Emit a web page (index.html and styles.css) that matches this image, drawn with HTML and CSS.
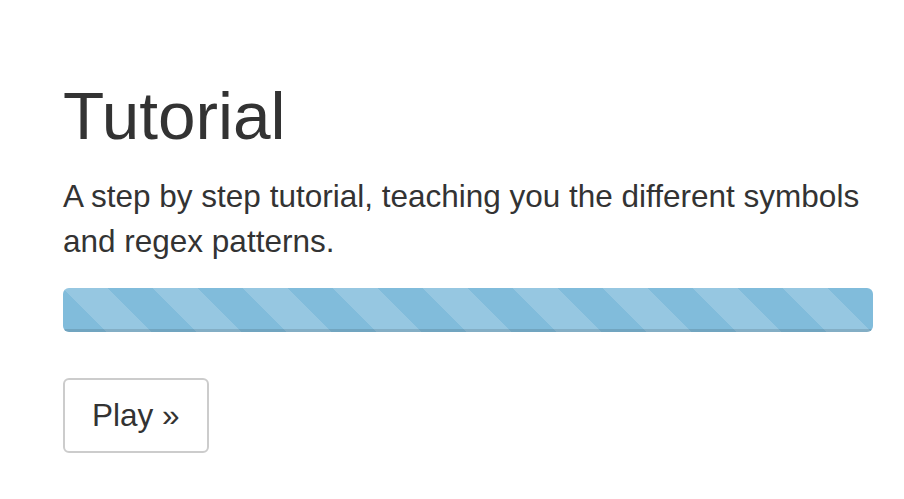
FILE: index.html
```html
<!DOCTYPE html>
<html lang="en">
<head>
<meta charset="utf-8">
<title>Tutorial</title>
<link rel="stylesheet" href="styles.css">
</head>
<body>
<main class="jumbotron">
  <h1 class="title">Tutorial</h1>
  <p class="lead">A step by step tutorial, teaching you the different symbols and regex patterns.</p>
  <div class="progress"><div class="progress-bar"></div></div>
  <div class="actions"><a class="btn" href="#">Play &raquo;</a></div>
</main>
</body>
</html>
```
FILE: styles.css
```css
html, body {
  margin: 0;
  padding: 0;
  background: #fff;
}
body {
  font-family: "Liberation Sans", Arial, sans-serif;
  color: #333;
}
.jumbotron {
  padding: 78px 31px 0 63px;
}
.title {
  margin: 0;
  font-size: 67.5px;
  line-height: 75px;
  font-weight: 400;
  color: #333;
}
.lead {
  margin: 21px 0 0;
  font-size: 31.5px;
  line-height: 45px;
}
.progress {
  margin-top: 24px;
  height: 44px;
  border-radius: 6px;
  overflow: hidden;
  background: #f5f5f5;
}
.progress-bar {
  height: 100%;
  width: 100%;
  background-color: #81bcdb;
  background-image: linear-gradient(45deg, rgba(255,255,255,.17) 25%, transparent 25%, transparent 50%, rgba(255,255,255,.17) 50%, rgba(255,255,255,.17) 75%, transparent 75%, transparent);
  background-size: 90px 90px;
  background-position: 0 0;
  box-shadow: inset 0 -3px 0 rgba(0,0,0,.12);
}
.actions {
  margin-top: 46px;
  display: flex;
}
.btn {
  display: inline-block;
  padding: 13px 27px;
  font-size: 31.5px;
  line-height: 45px;
  color: #333;
  text-decoration: none;
  background: #fff;
  border: 2px solid #ccc;
  border-radius: 6px;
}
```
